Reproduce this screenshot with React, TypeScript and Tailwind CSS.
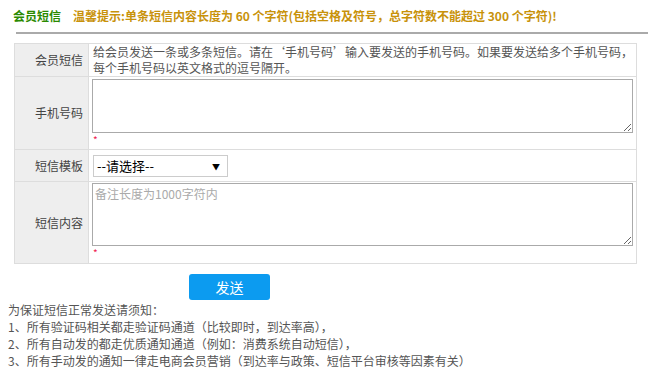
export default function App() {
  return (
    <div
      className="w-[654px] h-[372px] bg-white text-[12px] text-[#555] overflow-hidden"
      style={{ fontFamily: '"Microsoft YaHei", "Noto Sans CJK SC", sans-serif' }}
    >
      {/* Header */}
      <div className="pl-[13px] pr-[6px] pt-[7px]">
        <div className="flex items-center gap-[12px] h-[18px] font-bold">
          <span className="text-[#2a8a00]">会员短信</span>
          <span className="text-[#c8920a]">
            温馨提示:单条短信内容长度为 60 个字符(包括空格及符号，总字符数不能超过 300 个字符)!
          </span>
        </div>
        <div className="mt-[7px] ml-[3px] h-[2px] bg-[#aaa]" />
      </div>

      {/* Form table */}
      <table className="ml-[14px] mt-[9px] w-[623px] border-collapse">
        <tbody>
          <tr className="h-[33px]">
            <td className="w-[74px] border border-[#ddd] bg-[#eee] text-right pr-[5px] text-[#444]">会员短信</td>
            <td className="border border-[#ddd] pl-[4px] pr-[2px] leading-[16px] align-middle">
              给会员发送一条或多条短信。请在‘手机号码’输入要发送的手机号码。如果要发送给多个手机号码，每个手机号码以英文格式的逗号隔开。
            </td>
          </tr>
          <tr className="h-[73px]">
            <td className="border border-[#ddd] bg-[#eee] text-right pr-[5px] text-[#444]">手机号码</td>
            <td className="border border-[#ddd] pl-[3px] pt-[2px] align-top">
              <textarea className="block w-[541px] h-[54px] border border-[#aaa] resize-y outline-none" />
              <div className="text-[#f02050] text-[10px] leading-[14px] pl-[1px] h-[15px]">*</div>
            </td>
          </tr>
          <tr className="h-[32px]">
            <td className="border border-[#ddd] bg-[#eee] text-right pr-[5px] text-[#444]">短信模板</td>
            <td className="border border-[#ddd] pl-[4px] align-middle">
              <div className="relative w-[135px] h-[22px] border border-[#ccc] bg-white text-black text-[13px] leading-[20px] pl-[3px]">
                --请选择--
                <span className="absolute right-[7px] top-[7px] text-[8px] leading-none">▼</span>
              </div>
            </td>
          </tr>
          <tr className="h-[82px]">
            <td className="border border-[#ddd] bg-[#eee] text-right pr-[5px] text-[#444]">短信内容</td>
            <td className="border border-[#ddd] pl-[3px] pt-[1px] align-top">
              <textarea
                placeholder="备注长度为1000字符内"
                className="block w-[541px] h-[63px] border border-[#aaa] resize-y outline-none px-[2px] py-[1px] text-[12px] placeholder:text-[#aaa]"
              />
              <div className="text-[#f02050] text-[10px] leading-[14px] pl-[1px] h-[16px]">*</div>
            </td>
          </tr>
        </tbody>
      </table>

      {/* Button */}
      <div className="pl-[189px] mt-[10px]">
        <button className="w-[81px] h-[26px] rounded-[3px] bg-[#0c9bf0] text-white text-[14px]">发送</button>
      </div>

      {/* Notes */}
      <div className="pl-[8px] mt-[1px] leading-[17px] text-[#555]">
        <div>为保证短信正常发送请须知：</div>
        <div>1、所有验证码相关都走验证码通道（比较即时，到达率高），</div>
        <div>2、所有自动发的都走优质通知通道（例如：消费系统自动短信），</div>
        <div>3、所有手动发的通知一律走电商会员营销（到达率与政策、短信平台审核等因素有关）</div>
      </div>
    </div>
  );
}
